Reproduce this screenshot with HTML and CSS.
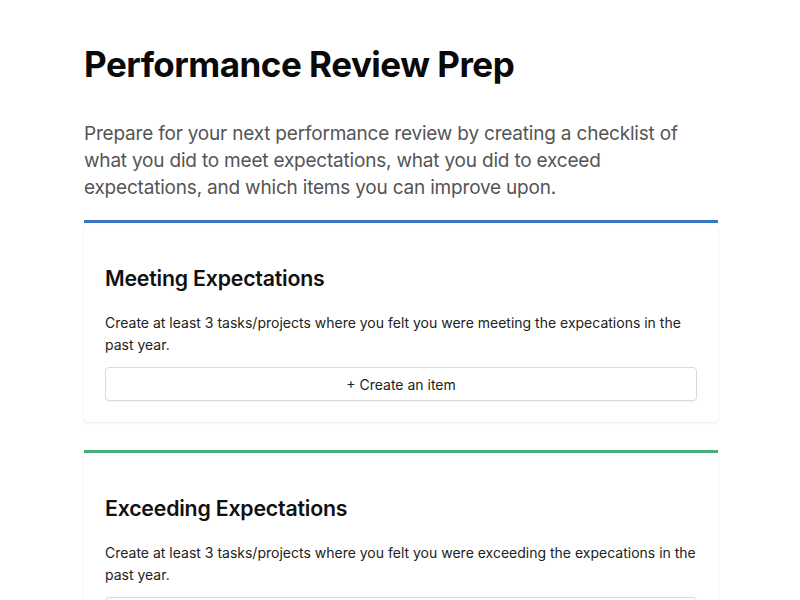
FILE: index.html
```html
<!DOCTYPE html>
<html lang="en">
<head>
<meta charset="utf-8">
<title>Performance Review Prep</title>
<link rel="stylesheet" href="styles.css">
</head>
<body>
<main class="page">
  <h1 class="title">Performance Review Prep</h1>
  <p class="lead">Prepare for your next performance review by creating a checklist of what you did to meet expectations, what you did to exceed expectations, and which items you can improve upon.</p>

  <section class="section section-blue">
    <div class="card">
      <h2 class="card-title">Meeting Expectations</h2>
      <p class="card-text">Create at least 3 tasks/projects where you felt you were meeting the expecations in the past year.</p>
      <button class="create-btn" type="button">+ Create an item</button>
    </div>
  </section>

  <section class="section section-green">
    <div class="card">
      <h2 class="card-title">Exceeding Expectations</h2>
      <p class="card-text">Create at least 3 tasks/projects where you felt you were exceeding the expecations in the past year.</p>
      <button class="create-btn" type="button">+ Create an item</button>
    </div>
  </section>
</main>
</body>
</html>
```

FILE: styles.css
```css
* { box-sizing: border-box; }

html, body {
  margin: 0;
  padding: 0;
  background: #ffffff;
}

body {
  font-family: Inter, "Liberation Sans", sans-serif;
  color: #111;
}

.page {
  width: 634px;
  margin-left: 84px;
  padding-top: 40px;
}

.title {
  margin: 0;
  font-size: 35px;
  font-weight: 700;
  letter-spacing: -0.5px;
  line-height: 48px;
  color: #0a0a0a;
}

.lead {
  max-width: 615px;
  margin: 32px 0 0;
  font-size: 19px;
  line-height: 27px;
  color: #555;
  letter-spacing: -0.2px;
}

.section {
  margin-top: 19px;
}

.section-blue { border-top: 3px solid #3876c1; }
.section-green { border-top: 3px solid #47ad7c; margin-top: 28px; }

.card {
  margin-top: 3px;
  padding: 35px 21px 21px;
  background: #fff;
  border-radius: 0 0 4px 4px;
  box-shadow: 0 1px 3px rgba(0, 0, 0, 0.08), 0 0 1px rgba(0, 0, 0, 0.1);
}

.card-title {
  margin: 0;
  font-size: 21.3px;
  line-height: 34px;
  font-weight: 600;
  letter-spacing: -0.2px;
  color: #111;
}

.card-text {
  margin: 17px 0 0;
  font-size: 14px;
  line-height: 22px;
  color: #222;
}

.create-btn {
  display: block;
  width: 100%;
  height: 34px;
  margin-top: 11px;
  border: 1px solid #d9d9de;
  border-radius: 4px;
  background: #fff;
  font-family: Inter, "Liberation Sans", sans-serif;
  font-size: 14px;
  color: #222;
  box-shadow: 0 1px 1px rgba(0, 0, 0, 0.05);
}
```
